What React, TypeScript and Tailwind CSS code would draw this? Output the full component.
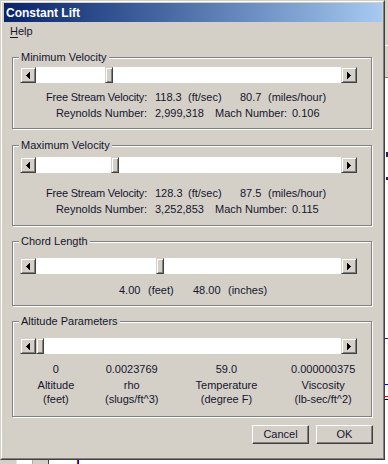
import type { ReactNode } from "react"

const ink = "text-[#15152e]"
const raised =
  "border border-t-[#d4d0c8] border-l-[#d4d0c8] border-r-[#404040] border-b-[#404040] bg-[#d4d0c8] shadow-[inset_1px_1px_0_#ffffff,inset_-1px_-1px_0_#808080]"

function Arrow({ dir }: { dir: "left" | "right" }) {
  return (
    <div className={`${raised} flex h-[16px] w-[16px] shrink-0 items-center justify-center`}>
      <svg width="4" height="7" viewBox="0 0 4 7" shapeRendering="crispEdges">
        {dir === "left" ? (
          <polygon points="0,3.5 4,-0.5 4,7.5" fill="#000" />
        ) : (
          <polygon points="4,3.5 0,-0.5 0,7.5" fill="#000" />
        )}
      </svg>
    </div>
  )
}

// offset = spacer class before the thumb, written out in full
function ScrollBar({ offset, className }: { offset: string; className: string }) {
  return (
    <div className={`ml-[7px] flex h-[16px] w-[337px] bg-white ${className}`}>
      <Arrow dir="left" />
      <div className="flex flex-1">
        <div className={`h-[16px] shrink-0 ${offset}`} />
        <div className={`${raised} h-[16px] w-[8px] shrink-0`} />
      </div>
      <Arrow dir="right" />
    </div>
  )
}

function Group({ title, className, children }: { title: string; className: string; children: ReactNode }) {
  return (
    <div
      className={`relative ml-[8px] w-[360px] shrink-0 border border-[#808080] shadow-[inset_1px_1px_0_#ffffff,1px_1px_0_#ffffff] ${className}`}
    >
      <span className="absolute -top-[8px] left-[6px] bg-[#d4d0c8] px-[2px] text-[11px] leading-[14px] whitespace-nowrap">
        {title}
      </span>
      {children}
    </div>
  )
}

function VelocityRows({
  fps,
  mph,
  reynolds,
  mach,
  className,
}: {
  fps: string
  mph: string
  reynolds: string
  mach: string
  className: string
}) {
  return (
    <div className={`text-[11px] leading-[16px] whitespace-nowrap ${className}`}>
      <div className="flex">
        <span className="w-[134px] text-right tracking-[-0.2px]">Free Stream Velocity:</span>
        <span className="ml-[8px] w-[33px]">{fps}</span>
        <span className="w-[52px]">(ft/sec)</span>
        <span className="w-[28px]">{mph}</span>
        <span>(miles/hour)</span>
      </div>
      <div className="flex">
        <span className="w-[134px] text-right">Reynolds Number:</span>
        <span className="ml-[8px] w-[60px]">{reynolds}</span>
        <span className="w-[77px]">Mach Number:</span>
        <span>{mach}</span>
      </div>
    </div>
  )
}

const altitude = [
  { value: "0", label: "Altitude", unit: "(feet)", w: "w-[60px]" },
  { value: "0.0023769", label: "rho", unit: "(slugs/ft^3)", w: "w-[92px]" },
  { value: "59.0", label: "Temperature", unit: "(degree F)", w: "w-[98px]" },
  { value: "0.000000375", label: "Viscosity", unit: "(lb-sec/ft^2)", w: "w-[96px]" },
]

function Button({ children }: { children: ReactNode }) {
  return (
    <div className="flex h-[19px] w-[57px] items-center justify-center border border-t-white border-l-white border-r-[#404040] border-b-[#404040] bg-[#d4d0c8] text-[11px] shadow-[inset_-1px_-1px_0_#808080]">
      {children}
    </div>
  )
}

export default function App() {
  return (
    <div className={`flex h-[464px] w-[388px] flex-col overflow-hidden bg-white font-['Liberation_Sans',Arial,sans-serif] ${ink}`}>
      <div className="flex h-[460px]">
        {/* dialog */}
        <div className="h-[460px] w-[385px] shrink-0 border border-t-[#d4d0c8] border-l-[#d4d0c8] border-r-[#404040] border-b-[#404040]">
          <div className="flex h-full flex-col border border-t-white border-l-white border-r-[#808080] border-b-[#808080] bg-[#d4d0c8] pt-[1px] pr-[1px] pl-[2px]">
            <div className="flex h-[19px] shrink-0 items-center bg-linear-to-r from-[#0a246a] to-[#a6caf0] pl-[2px] text-[12px] font-bold text-white">
              Constant Lift
            </div>
            <div className="flex h-[19px] shrink-0 items-center pl-[6px] text-[11px]">
              <span className="underline underline-offset-[2px]">H</span>elp
            </div>

            <Group title="Minimum Velocity" className="mt-[16px] h-[72px]">
              <ScrollBar offset="w-[69px]" className="mt-[9px]" />
              <VelocityRows fps="118.3" mph="80.7" reynolds="2,999,318" mach="0.106" className="mt-[6px]" />
            </Group>

            <Group title="Maximum Velocity" className="mt-[16px] h-[81px]">
              <ScrollBar offset="w-[75px]" className="mt-[11px]" />
              <VelocityRows fps="128.3" mph="87.5" reynolds="3,252,853" mach="0.115" className="mt-[12px]" />
            </Group>

            <Group title="Chord Length" className="mt-[15px] h-[65px]">
              <ScrollBar offset="w-[120px]" className="mt-[16px]" />
              <div className="mt-[8px] flex text-[11px] leading-[16px] whitespace-nowrap">
                <span className="ml-[106px] w-[29px]">4.00</span>
                <span className="w-[45px]">(feet)</span>
                <span className="w-[35px]">48.00</span>
                <span>(inches)</span>
              </div>
            </Group>

            <Group title="Altitude Parameters" className="mt-[15px] h-[96px]">
              <ScrollBar offset="w-0" className="mt-[16px]" />
              <div className="mt-[7px] ml-[13px] flex text-[11px] whitespace-nowrap">
                {altitude.map((a) => (
                  <div key={a.label} className={`${a.w} flex flex-col items-center text-center`}>
                    <span className="leading-[16px]">{a.value}</span>
                    <span className="mt-[1px] leading-[14px]">{a.label}</span>
                    <span className="leading-[14px]">{a.unit}</span>
                  </div>
                ))}
              </div>
            </Group>

            <div className="mt-[8px] ml-[8px] flex w-[361px] justify-end gap-[7px]">
              <Button>Cancel</Button>
              <Button>OK</Button>
            </div>
          </div>
        </div>

        {/* window behind, right edge */}
        <div className="flex w-[3px] flex-col">
          <div className="h-[45px] bg-[#d4d0c8]" />
          <div className="h-[1px] bg-white" />
          <div className="h-[31px] bg-[#d4d0c8]" />
          <div className="h-[1px] bg-[#808080]" />
          <div className="h-[74px]" />
          <div className="ml-[1px] h-[5px] w-[2px] bg-[#1f1f60]" />
          <div className="h-[20px]" />
          <div className="ml-[1px] h-[3px] w-[2px] bg-[#1f1f60]" />
          <div className="h-[158px]" />
          <div className="h-[1px] bg-[#1f1f60]" />
          <div className="h-[45px]" />
          <div className="h-[1px] bg-[#0000ff]" />
          <div className="h-[11px]" />
          <div className="h-[1px] bg-[#ff0000]" />
          <div className="h-[2px]" />
          <div className="h-[1px] bg-black" />
        </div>
      </div>

      {/* window behind, bottom edge */}
      <div className="flex h-[4px]">
        <div className="w-[16px] bg-[#d4d0c8]" />
        <div className="w-[1px] bg-[#e8e6e0]" />
        <div className="w-[15px] bg-white" />
        <div className="w-[1px] bg-[#b0aca4]" />
        <div className="w-[15px] bg-[#d4d0c8]" />
        <div className="w-[1px] bg-[#404040]" />
        <div className="w-[28px] bg-white" />
        <div className="w-[1px] bg-[#ff0000]" />
        <div className="w-[1px] bg-[#0000ff]" />
      </div>
    </div>
  )
}
